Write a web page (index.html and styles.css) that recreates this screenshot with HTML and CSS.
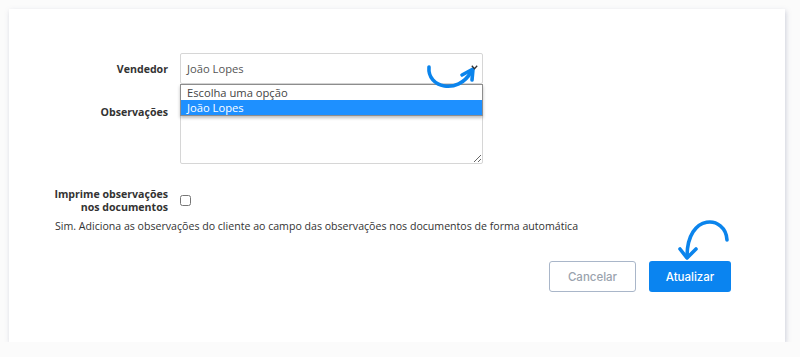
FILE: index.html
```html
<!DOCTYPE html>
<html>
<head>
    <title>Editar cliente</title>
    <link rel="stylesheet" href="styles.css">
</head>
<body>
    <div class="card">
        <div class="form-row">
            <label class="form-label">Vendedor</label>
            <div class="select-wrap">
                <div class="select-box">
                    <span>João Lopes</span>
                    <svg class="chevron" width="7" height="5" viewBox="0 0 7 5">
                        <path d="M0.8 0.8 L3.5 3.8 L6.2 0.8" fill="none" stroke="#333" stroke-width="1.3"/>
                    </svg>
                </div>
                <ul class="select-options">
                    <li>Escolha uma opção</li>
                    <li class="active">João Lopes</li>
                </ul>
                <!-- seta de destaque -->
                <svg class="hint hint-select" width="64" height="40" viewBox="0 0 64 40">
                    <path d="M9 12 C 7 33, 38 40, 51 17" fill="none" stroke="#0b84ec" stroke-width="3.6" stroke-linecap="round"/>
                    <path d="M42 20 L 53 14 L 52 25" fill="none" stroke="#0b84ec" stroke-width="3.6" stroke-linecap="round" stroke-linejoin="round"/>
                </svg>
            </div>
        </div>

        <div class="form-row">
            <label class="form-label label-top">Observações</label>
            <textarea class="notes"></textarea>
        </div>

        <div class="form-row row-check">
            <label class="form-label">Imprime observações<br>nos documentos</label>
            <input type="checkbox" class="check">
        </div>
        <p class="help">Sim. Adiciona as observações do cliente ao campo das observações nos documentos de forma automática</p>

        <div class="actions">
            <button class="btn btn-cancel">Cancelar</button>
            <div class="btn-wrap">
                <button class="btn btn-primary">Atualizar</button>
                <svg class="hint hint-button" width="60" height="48" viewBox="0 0 60 48">
                    <path d="M52 23 C 51 -2, 12 -5, 12 40" fill="none" stroke="#0b84ec" stroke-width="3.6" stroke-linecap="round"/>
                    <path d="M5 32 L 12 41 L 21 32" fill="none" stroke="#0b84ec" stroke-width="3.6" stroke-linecap="round" stroke-linejoin="round"/>
                </svg>
            </div>
        </div>
    </div>
</body>
</html>
```

FILE: styles.css
```css
body {
    margin: 0;
    background-color: #fbfbfb;
    font-family: "Open Sans", "Noto Sans", sans-serif;
    font-size: 10.6px;
    color: #333;
}
.card {
    margin: 9px 0 0 9px;
    width: 776px;
    height: 333px;
    box-sizing: border-box;
    background-color: #fff;
    box-shadow: 1px 2px 5px rgba(120, 130, 160, 0.35);
    padding-top: 44px;
}
.form-row {
    display: grid;
    grid-template-columns: 159px 303px;
    column-gap: 12px;
    align-items: center;
    margin-bottom: 13px;
}
.form-label {
    text-align: right;
    font-weight: 700;
    color: #333;
    line-height: 12px;
}
.label-top {
    align-self: start;
    padding-top: 9px;
}
.select-wrap {
    position: relative;
}
.select-box {
    height: 31px;
    box-sizing: border-box;
    border: 1px solid #d6d6d6;
    border-radius: 2px;
    display: flex;
    align-items: center;
    justify-content: space-between;
    padding: 0 4px 0 6px;
    color: #555;
    font-size: 11.2px;
}
.chevron {
    position: relative;
    z-index: 4;
    margin-top: -3px;
}
.select-options {
    position: absolute;
    top: 31px;
    left: 0;
    right: 0;
    margin: 0;
    padding: 0;
    list-style: none;
    background-color: #fff;
    border: 1px solid #8d8d8d;
    box-shadow: 0 2px 3px rgba(0, 0, 0, 0.25);
    z-index: 2;
}
.select-options li {
    height: 15px;
    line-height: 15px;
    padding-left: 6px;
    font-size: 11.2px;
    color: #444;
}
.select-options li.active {
    background-color: #1e90ff;
    color: #fff;
}
.hint {
    position: absolute;
    z-index: 3;
}
.hint-select {
    left: 240px;
    top: 2px;
}
.notes {
    height: 67px;
    box-sizing: border-box;
    border: 1px solid #d6d6d6;
    border-radius: 2px;
    margin: 0;
    resize: vertical;
}
.row-check {
    margin-top: 24px;
    margin-bottom: 6px;
}
.row-check .form-label {
    line-height: 12.5px;
}
.check {
    margin: 0;
    width: 11px;
    height: 11px;
    justify-self: start;
}
.help {
    margin: 0;
    padding-left: 46px;
    color: #333;
}
.actions {
    display: flex;
    justify-content: flex-end;
    gap: 13px;
    margin-top: 28px;
    padding-right: 54px;
}
.btn-wrap {
    position: relative;
}
.btn {
    height: 31px;
    border-radius: 3px;
    font-family: "Inter", "Lato", sans-serif;
    font-size: 11.5px;
    font-weight: 500;
    cursor: pointer;
}
.btn-cancel {
    width: 87px;
    background-color: #fff;
    border: 1px solid #a9b6c9;
    color: #9aa3ae;
}
.btn-primary {
    width: 82px;
    background-color: #0a84f0;
    border: none;
    color: #fff;
}
.hint-button {
    left: 26px;
    top: -44px;
}
```
